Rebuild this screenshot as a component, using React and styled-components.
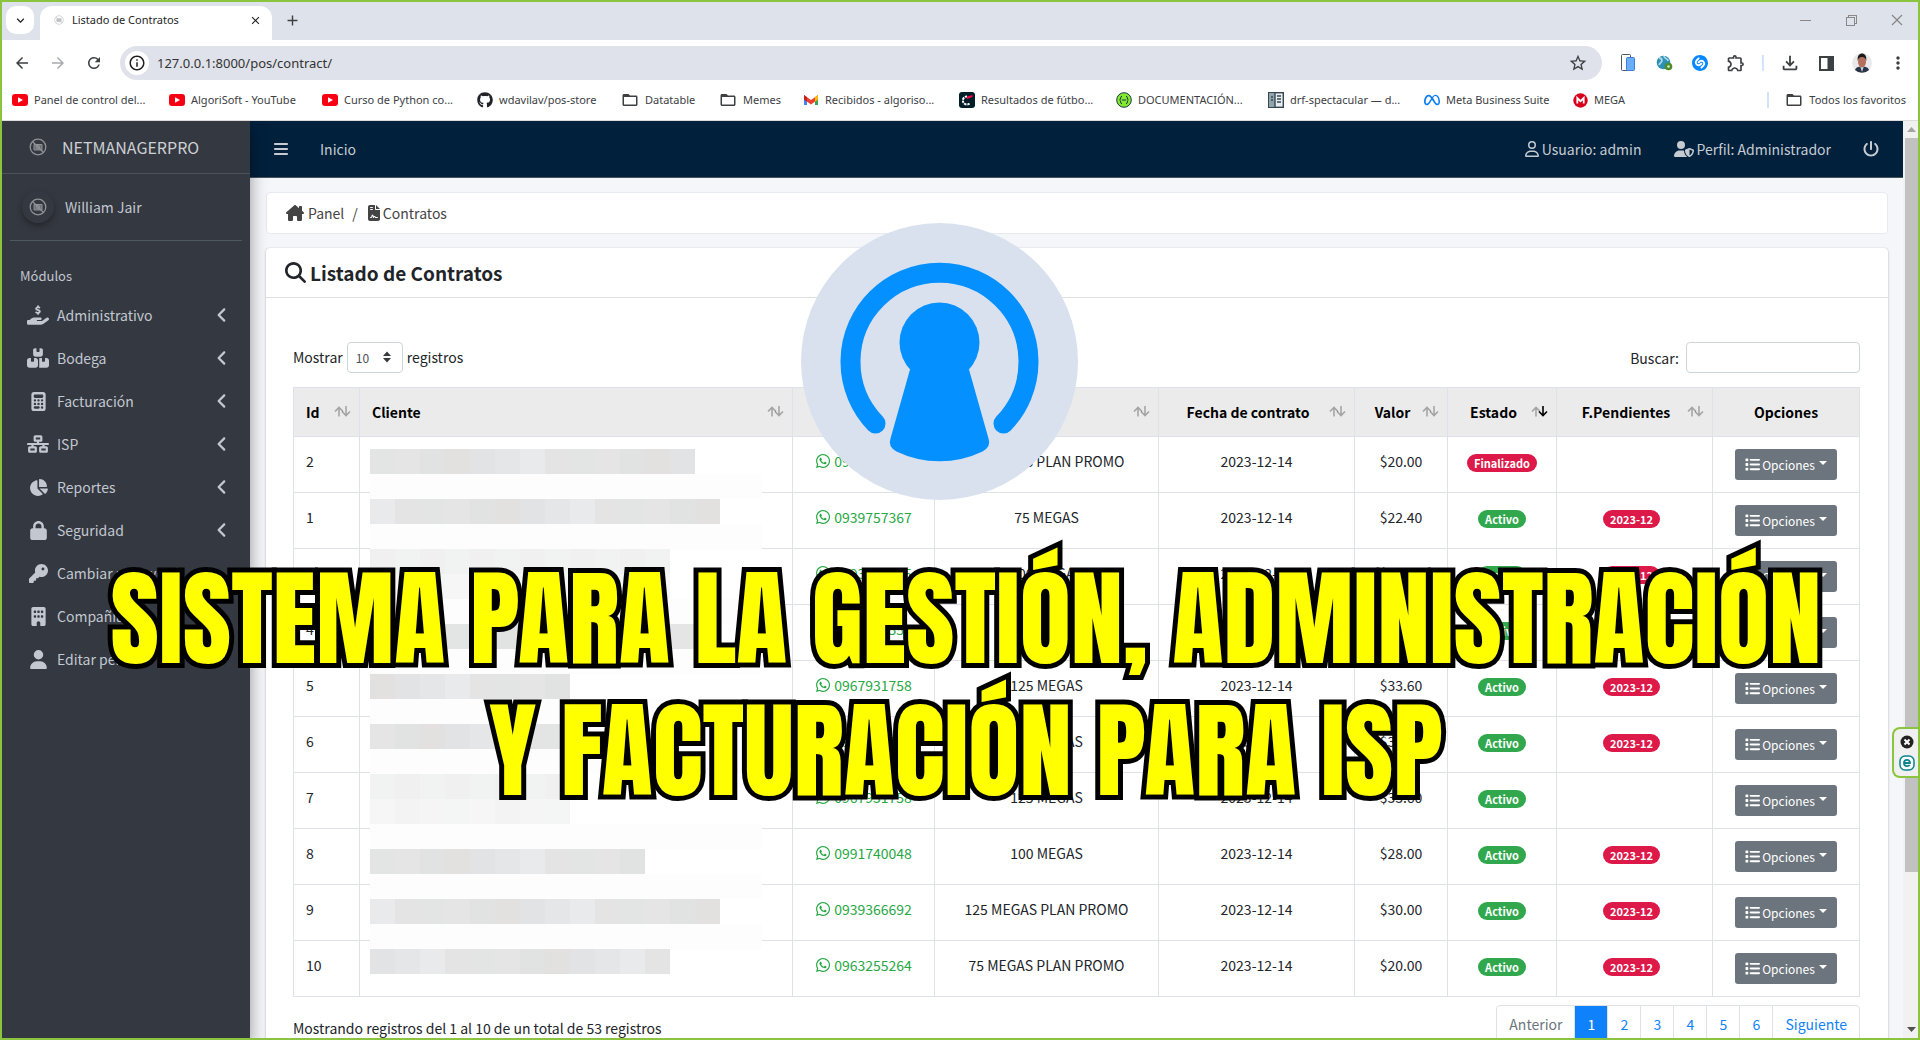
import React from "react";
import styled, { createGlobalStyle } from "styled-components";
import {
	FaAngleLeft,
	FaBars,
	FaBoxesStacked,
	FaBuilding,
	FaCalculator,
	FaChartPie,
	FaFileContract,
	FaGithub,
	FaHandHoldingDollar,
	FaHouseChimney,
	FaKey,
	FaList,
	FaLock,
	FaMagnifyingGlass,
	FaMeta,
	FaNetworkWired,
	FaPowerOff,
	FaRegUser,
	FaUser,
	FaUserShield,
	FaWhatsapp,
} from "react-icons/fa6";
import {
	MdAdd,
	MdArrowBack,
	MdArrowForward,
	MdClose,
	MdExpandMore,
	MdFolderOpen,
	MdInfoOutline,
	MdMoreVert,
	MdOutlineExtension,
	MdOutlineFileDownload,
	MdRefresh,
	MdStarBorder,
} from "react-icons/md";
import { SiShazam } from "react-icons/si";
import { VscChromeClose, VscChromeMinimize, VscChromeRestore } from "react-icons/vsc";

const GlobalStyle = createGlobalStyle`
	*, *::before, *::after {
		box-sizing: border-box;
	}
	body {
		margin: 0;
		color: #212529;
		font-family: "Noto Sans CJK SC", "Open Sans", sans-serif;
		font-size: 14px;
		line-height: 24px;
	}
	a {
		color: inherit;
		text-decoration: none;
	}
	button {
		padding: 0;
		border: 0;
		background: none;
		color: inherit;
		font: inherit;
	}
	svg {
		display: block;
		flex: none;
	}
`;

/* ---------- browser window ---------- */

const Window = styled.div`
	position: relative;
	display: flex;
	flex-direction: column;
	height: 100vh;
	overflow: hidden;
	border: 2px solid #8bc53f;
	background: #fff;
`;
const Chrome = styled.header`
	flex: none;
	background: #fff;
	border-bottom: 1px solid #dcdcdc;
	color: #3c4043;
	font-family: "Noto Sans", "Open Sans", sans-serif;
	font-size: 11px;
	line-height: 16px;
`;
const TabStrip = styled.div`
	display: flex;
	align-items: flex-start;
	height: 38px;
	padding: 4px 4px 0;
	background: #dee2ea;
`;
const TabSearch = styled.button`
	display: grid;
	place-items: center;
	width: 28px;
	height: 28px;
	border-radius: 10px;
	background: #fff;
	color: #1f1f1f;
`;
const Tab = styled.div`
	display: flex;
	align-items: center;
	gap: 8px;
	width: 232px;
	height: 34px;
	margin-left: 6px;
	padding: 0 10px 6px 14px;
	border-radius: 12px 12px 0 0;
	background: #fff;
	color: #1f1f1f;
`;
const TabIcon = styled.span`
	opacity: 0.5;
`;
const TabTitle = styled.span`
	flex: 1;
`;
const NewTab = styled.button`
	display: grid;
	place-items: center;
	width: 40px;
	height: 28px;
`;
const WindowButtons = styled.div`
	display: flex;
	gap: 30px;
	margin-left: auto;
	padding: 6px 9px 0 0;
	color: #888;
`;
const Toolbar = styled.div`
	display: flex;
	align-items: center;
	height: 46px;
	padding: 0 12px;
`;
const ToolButton = styled.button`
	display: grid;
	place-items: center;
	width: 36px;
	height: 32px;
	color: ${(p) => (p.$muted ? "#a9abae" : "#3c4043")};
`;
const NavButtons = styled.div`
	display: flex;
	margin-left: -10px;
`;
const Omnibox = styled.div`
	display: flex;
	align-items: center;
	flex: 1;
	height: 34px;
	margin: 0 8px 0 8px;
	padding: 0 14px 0 5px;
	border-radius: 17px;
	background: #dfe2ea;
`;
const SiteInfo = styled.button`
	display: grid;
	place-items: center;
	width: 24px;
	height: 24px;
	border-radius: 12px;
	background: #fff;
	color: #1f1f1f;
`;
const Address = styled.input`
	flex: 1;
	margin-left: 8px;
	padding: 0;
	border: 0;
	outline: 0;
	background: none;
	color: #333;
	font-family: inherit;
	font-size: 13px;
	line-height: 20px;
`;
const ToolDivider = styled.span`
	width: 2px;
	height: 16px;
	margin: 0 8px;
	background: #d3e3fd;
`;
const ToolGroup = styled.div`
	display: flex;
	align-items: center;
	margin-right: -10px;
`;
const Bookmarks = styled.nav`
	display: flex;
	align-items: center;
	height: 34px;
	padding: 0 12px 6px 10px;
`;
const Bookmark = styled.a`
	display: flex;
	align-items: center;
	gap: 6px;
	width: ${(p) => (p.$width ? `${p.$width}px` : "auto")};
	white-space: nowrap;
`;
const AllBookmarks = styled(Bookmark)`
	margin-left: 8px;
`;
const Spacer = styled.span`
	flex: 1;
`;

/* ---------- page ---------- */

const Viewport = styled.div`
	display: flex;
	flex: 1;
	min-height: 0;
	overflow: hidden;
	background: #f4f6f9;
`;
const Sidebar = styled.aside`
	position: relative;
	flex: none;
	width: 248px;
	background: #343840;
	box-shadow: 0 8px 16px rgba(0, 0, 0, 0.4);
	color: #c2c7d0;
`;
const Brand = styled.a`
	display: flex;
	align-items: center;
	gap: 15px;
	height: 53px;
	padding-left: 27px;
	border-bottom: 1px solid #4b545c;
	color: #cdd0d4;
	font-size: 16px;
`;
const UserPanel = styled.div`
	display: flex;
	align-items: center;
	gap: 11px;
	height: 67px;
	margin: 0 8px;
	padding-left: 12px;
	border-bottom: 1px solid #4f5962;
`;
const Avatar = styled.span`
	display: grid;
	place-items: center;
	width: 32px;
	height: 32px;
	border-radius: 16px;
	box-shadow: 0 3px 6px rgba(0, 0, 0, 0.35);
`;
const MenuHeader = styled.div`
	padding: 23px 18px 7px;
	font-size: 13px;
`;
const Menu = styled.nav`
	display: flex;
	flex-direction: column;
	gap: 3px;
`;
const MenuItem = styled.a`
	display: flex;
	align-items: center;
	height: 40px;
	padding: 0 19px 0 22px;
`;
const MenuIcon = styled.span`
	display: grid;
	place-items: center;
	width: 28px;
	margin-right: 5px;
	font-size: ${(p) => (p.$wide ? 22 : 19)}px;
`;
const MenuLabel = styled.span`
	flex: 1;
`;
const Content = styled.div`
	flex: 1;
	min-width: 0;
`;
const Navbar = styled.nav`
	display: flex;
	align-items: center;
	height: 57px;
	padding: 0 24px 0 23px;
	border-bottom: 1px solid #4b545c;
	background: #00203c;
	color: #c6cbd2;
`;
const NavLink = styled.a`
	display: flex;
	align-items: center;
	gap: 2px;
	margin-left: ${(p) => p.$gap || 0}px;
`;
const Main = styled.main`
	padding: 14px 15px 0 16px;
`;
const Breadcrumb = styled.nav`
	display: flex;
	align-items: center;
	gap: 8px;
	height: 42px;
	padding: 0 19px;
	border: 1px solid #e6e9ee;
	border-radius: 4px;
	background: #fff;
	color: #444;
`;
const Crumb = styled.a`
	display: flex;
	align-items: center;
	gap: ${(p) => p.$gap}px;
`;
const Card = styled.section`
	margin-top: 14px;
	border-radius: 4px;
	background: #fff;
	box-shadow: 0 0 1px rgba(0, 0, 0, 0.2), 0 1px 3px rgba(0, 0, 0, 0.2);
`;
const CardHeader = styled.header`
	display: flex;
	align-items: center;
	gap: 4px;
	height: 50px;
	padding-left: 19px;
	border-bottom: 1px solid #dfdfdf;
`;
const CardTitle = styled.h1`
	margin: 0;
	font-size: 19px;
	font-weight: 700;
	line-height: 24px;
`;
const CardBody = styled.div`
	padding: 44px 28px 60px 27px;
`;
const Controls = styled.div`
	display: flex;
	justify-content: space-between;
	margin-bottom: 14px;
`;
const Control = styled.label`
	display: flex;
	align-items: ${(p) => (p.$baseline ? "baseline" : "center")};
	gap: ${(p) => p.$gap}px;
	height: 31px;
`;
const SelectBox = styled.span`
	position: relative;
	svg {
		position: absolute;
		right: 12px;
		top: 9px;
		pointer-events: none;
	}
`;
const Select = styled.select`
	appearance: none;
	display: block;
	width: 56px;
	height: 31px;
	padding: 0 8px;
	border: 1px solid #ced4da;
	border-radius: 4px;
	background: #fff;
	color: #495057;
	font-family: inherit;
	font-size: 12px;
`;
const SearchInput = styled.input`
	width: 174px;
	height: 31px;
	border: 1px solid #ced4da;
	border-radius: 4px;
	background: #fff;
	font: inherit;
`;
const TableArea = styled.div`
	position: relative;
`;
const Table = styled.table`
	width: 100%;
	table-layout: fixed;
	border-collapse: collapse;
`;
const HeadCell = styled.th`
	height: 49px;
	padding: 0 ${(p) => (p.$sortable ? 8 : 12)}px 0 12px;
	border: 1px solid #dee2e6;
	background: #ebebeb;
	color: #000;
	font-weight: 700;
	white-space: nowrap;
`;
const HeadInner = styled.span`
	display: flex;
	align-items: center;
	gap: 4px;
`;
const HeadText = styled.span`
	flex: 1;
	text-align: ${(p) => (p.$left ? "left" : "center")};
`;
const Cell = styled.td`
	height: 56px;
	padding: 12px 12px 0;
	border: 1px solid #dee2e6;
	text-align: ${(p) => (p.$left ? "left" : "center")};
	vertical-align: top;
	white-space: nowrap;
`;
const Phone = styled.a`
	display: inline-flex;
	align-items: center;
	gap: 3px;
	color: #28a745;
`;
const Badge = styled.span`
	display: inline-block;
	margin-top: 5px;
	margin-right: ${(p) => (p.$spaced ? 6 : 0)}px;
	padding: 0 7px;
	border-radius: 9px;
	background: ${(p) => (p.$danger ? "#dc1948" : "#32a84e")};
	color: #fff;
	font-size: 11px;
	font-weight: 700;
	line-height: 18px;
	vertical-align: top;
`;
const OptionsButton = styled.button`
	display: inline-flex;
	align-items: center;
	justify-content: center;
	gap: 2px;
	width: 102px;
	height: 31px;
	border-radius: 3px;
	background: #6c757d;
	color: #fff;
	font-size: 12px;
	vertical-align: top;
`;
const Caret = styled.span`
	margin: -4px 0 0 2px;
	border: 4px solid transparent;
	border-top-color: #fff;
	border-bottom: 0;
`;
const Mosaic = styled.div`
	position: absolute;
	top: 62px;
	left: 77px;
	width: 392px;
	pointer-events: none;
`;
const MosaicRow = styled.div`
	display: flex;
	height: 25px;
	background: ${(p) => (p.$blank ? "#fdfdfd" : "#fff")};
`;
const Tile = styled.span`
	width: 25px;
	background: ${(p) => p.$color};
`;
const TableFooter = styled.div`
	display: flex;
	justify-content: space-between;
	padding-top: 8px;
`;
const Info = styled.div`
	padding-top: 11px;
`;
const Pagination = styled.nav`
	display: flex;
	height: 38px;
	border: 1px solid #dee2e6;
	border-radius: 4px;
`;
const PageLink = styled.a`
	display: grid;
	place-items: center;
	min-width: 33px;
	padding: 0 12px;
	border-right: 1px solid #dee2e6;
	background: ${(p) => (p.$active ? "#0f82fb" : "none")};
	color: ${(p) => (p.$active ? "#fff" : p.$muted ? "#6c757d" : "#0f82fb")};
	&:last-child {
		border-right: 0;
	}
`;

const Scrollbar = styled.div`
	display: flex;
	flex: none;
	flex-direction: column;
	align-items: flex-end;
	width: 15px;
	background: #f1f1f1;
	svg {
		margin: 6px 2px 5px;
	}
`;
const Thumb = styled.span`
	width: 13px;
	height: 80%;
	background: #c1c1c1;
`;

/* ---------- things floating over the window ---------- */

const Logo = styled.svg`
	position: absolute;
	left: 799px;
	top: 221px;
	width: 277px;
	height: 277px;
`;
const Headline = styled.h2`
	position: absolute;
	top: 551px;
	left: 0;
	width: 100%;
	margin: 0;
	padding-left: 12px;
	color: #ff0;
	font-family: Anton, "Roboto Condensed", sans-serif;
	font-size: 105px;
	font-weight: 400;
	line-height: 132px;
	text-align: center;
	white-space: nowrap;
	-webkit-text-stroke: 10px #000;
	paint-order: stroke fill;
	stroke-linejoin: round;
	pointer-events: none;
	span {
		display: block;
	}
`;
const SideWidget = styled.div`
	position: absolute;
	right: -2px;
	top: 725px;
	display: flex;
	flex-direction: column;
	align-items: center;
	gap: 6px;
	width: 28px;
	padding: 6px 2px 5px;
	border: 2px solid #8bc53f;
	border-right-width: 0;
	border-radius: 8px 0 0 8px;
	background: #f0f0f0;
`;

/* ---------- drawings ---------- */

function YoutubeIcon() {
	return (
		<svg width="16" height="12" viewBox="0 0 16 12">
			<rect width="16" height="12" rx="3" fill="#f80014" />
			<path d="M6 3.2v5.6L11 6z" fill="#fff" />
		</svg>
	);
}

function GmailIcon() {
	return (
		<svg width="16" height="12" viewBox="0 0 16 12">
			<path d="M1 1.5V11h3V4z" fill="#4285f4" />
			<path d="M12 4v7h3V1.5z" fill="#34a853" />
			<path d="M1 1 8 6l7-5v4.500L8 10.500 1 5.500z" fill="#ea4335" />
			<path d="M12 3.2 15 1v4.500l-3 2.200z" fill="#fbbc04" />
			<path d="M1 1l3 2.200v4.500L1 5.500z" fill="#c5221f" />
		</svg>
	);
}

function ScoreIcon() {
	return (
		<svg width="16" height="16" viewBox="0 0 16 16">
			<rect width="16" height="16" rx="3" fill="#001e28" />
			<path d="M10.500 11.500A4 4 0 1 1 8 4.500" fill="none" stroke="#fff" strokeWidth="2" strokeDasharray="2.4 0.8" />
			<path d="M8 7V4.500L13.500 3v2z" fill="#ff0046" />
		</svg>
	);
}

function SwaggerIcon() {
	return (
		<svg width="16" height="16" viewBox="0 0 16 16" fill="none" stroke="#173647">
			<circle cx="8" cy="8" r="7.3" fill="#85ea2d" />
			<path d="M6 4.2c-2 0-.8 3.4-2.4 3.8C5.2 8.4 4 11.8 6 11.8M10 4.2c2 0 .8 3.4 2.4 3.8-1.6.4-.4 3.8-2.4 3.8M5.8 8h4.4" />
		</svg>
	);
}

function DocsIcon() {
	return (
		<svg width="16" height="16" viewBox="0 0 16 16">
			<rect x=".7" y=".7" width="14.6" height="14.6" fill="#e8edf0" stroke="#37474f" strokeWidth="1.4" />
			<path d="M1 1h6v14H1z" fill="#90a4ae" />
			<path d="M7 1v14M3 5h2M3 8h2M9 4h4M9 7h4M9 10h4" stroke="#37474f" strokeWidth="1.4" />
		</svg>
	);
}

function MegaIcon() {
	return (
		<svg width="15" height="15" viewBox="0 0 15 15">
			<circle cx="7.5" cy="7.5" r="7.2" fill="#d9001b" />
			<path d="M4.3 10.5V5l3.2 3.2L10.7 5v5.5" fill="none" stroke="#fff" strokeWidth="1.8" />
		</svg>
	);
}

function NoPhotoIcon({ size = 18 }) {
	return (
		<svg width={size} height={size} viewBox="0 0 18 18" fill="none" stroke="#8f9296">
			<circle cx="9" cy="9" r="7.8" strokeWidth="1.3" />
			<path d="M5 6.5h8V12H5z" fill="#6b6e73" />
			<circle cx="9" cy="9.2" r="1.7" />
			<path d="m3.5 3.5 11 11" strokeWidth="1.3" />
		</svg>
	);
}

function DevicesIcon() {
	return (
		<svg width="16" height="18" viewBox="0 0 16 18">
			<rect x="1.5" y=".5" width="9" height="16" rx="1" fill="#fff" stroke="#4a5568" />
			<rect x="6.5" y="3.5" width="8" height="13" rx="1" fill="#6aaefb" stroke="#3b7dd8" />
		</svg>
	);
}

function GlobeIcon() {
	return (
		<svg width="17" height="16" viewBox="0 0 17 16">
			<circle cx="7.5" cy="7.5" r="6.8" fill="#2f8fb5" />
			<path d="M3 3c2 0 3 1 3 2.5S3.500 8 3 10M8 1c0 3 4 2 4 5" fill="none" stroke="#a6dbe8" strokeWidth="1.8" />
			<circle cx="12.5" cy="11.5" r="3.8" fill="#4c8c2b" />
			<circle cx="12.5" cy="11.5" r="1.3" fill="#d7efc8" />
		</svg>
	);
}

function SidePanelIcon() {
	return (
		<svg width="15" height="15" viewBox="0 0 15 15">
			<rect x="1" y="1" width="13" height="13" fill="none" stroke="#3c4043" strokeWidth="2" />
			<path d="M8.5 1H14v13H8.5z" fill="#3c4043" />
		</svg>
	);
}

function ProfileIcon() {
	return (
		<svg width="20" height="20" viewBox="0 0 20 20">
			<circle cx="10" cy="10" r="10" fill="#e9e9ec" />
			<path d="M3 17c1-3 4-3.5 7-3.5s6 .5 7 3.5a10 10 0 0 1-14 0" fill="#2b3346" />
			<path d="m8 13 2 6 2-6z" fill="#c9d6e6" />
			<ellipse cx="10" cy="8.500" rx="4" ry="6" fill="#b5705c" />
			<path d="M5.800 8C5 2.500 7.500 .5 10 .5s5 2 4.200 7.500C13.500 5 12.500 4 10 4S6.500 5 5.800 8" fill="#1d1a1c" />
		</svg>
	);
}

function SortIcon({ desc }) {
	return (
		<svg width="17" height="12" viewBox="0 0 17 12" fill="none" stroke="#000" strokeWidth="1.6">
			<path d="M5 10.500V1.500M1 5.500l4-4 4 4" opacity="0.3" />
			<path d="M12 0v9.500M8 5.500l4 4 4-4" opacity={desc ? 1 : 0.3} />
		</svg>
	);
}

function KeyholeLogo() {
	return (
		<Logo viewBox="-138.5 -138.5 277 277">
			<circle r="138.5" fill="#d9e1ef" />
			<path d="M-64 62a89 89 0 1 1 128 0" fill="none" stroke="#0590ff" strokeWidth="20" strokeLinecap="round" />
			<circle cy="-19" r="40" fill="#0590ff" />
			<path d="M-29.5 8-49 77q-3 8 6 13a99 99 0 0 0 86 0q9-5 6-13L29.5 8z" fill="#0590ff" />
		</Logo>
	);
}

/* ---------- data ---------- */

const folder = <MdFolderOpen size={18} />;

const bookmarks = [
	{ label: "Panel de control del...", icon: <YoutubeIcon />, width: 157 },
	{ label: "AlgoriSoft - YouTube", icon: <YoutubeIcon />, width: 153 },
	{ label: "Curso de Python co...", icon: <YoutubeIcon />, width: 155 },
	{ label: "wdavilav/pos-store", icon: <FaGithub size={16} color="#1f2328" />, width: 144 },
	{ label: "Datatable", icon: folder, width: 98 },
	{ label: "Memes", icon: folder, width: 84 },
	{ label: "Recibidos - algoriso...", icon: <GmailIcon />, width: 156 },
	{ label: "Resultados de fútbo...", icon: <ScoreIcon />, width: 157 },
	{ label: "DOCUMENTACIÓN...", icon: <SwaggerIcon />, width: 152 },
	{ label: "drf-spectacular — d...", icon: <DocsIcon />, width: 156 },
	{ label: "Meta Business Suite", icon: <FaMeta size={16} color="#0a7cf5" />, width: 149 },
	{ label: "MEGA", icon: <MegaIcon />, width: 60 },
];

const modules = [
	{ label: "Administrativo", icon: FaHandHoldingDollar, open: true, wide: true },
	{ label: "Bodega", icon: FaBoxesStacked, open: true, wide: true },
	{ label: "Facturación", icon: FaCalculator, open: true },
	{ label: "ISP", icon: FaNetworkWired, open: true, wide: true },
	{ label: "Reportes", icon: FaChartPie, open: true },
	{ label: "Seguridad", icon: FaLock, open: true },
	{ label: "Cambiar password", icon: FaKey },
	{ label: "Compañía", icon: FaBuilding },
	{ label: "Editar perfil", icon: FaUser },
];

const columns = [
	{ label: "Id", width: 66, left: true, sort: true },
	{ label: "Cliente", left: true, sort: true },
	{ label: "Celular", width: 142, sort: true },
	{ label: "Plan", width: 224, sort: true },
	{ label: "Fecha de contrato", width: 196, sort: true },
	{ label: "Valor", width: 93, sort: true },
	{ label: "Estado", width: 109, sort: true, desc: true },
	{ label: "F.Pendientes", width: 156, sort: true },
	{ label: "Opciones", width: 147 },
];

const contracts = [
	{ id: 2, phone: "0963255264", plan: "75 MEGAS PLAN PROMO", value: "$20.00", ended: true },
	{ id: 1, phone: "0939757367", plan: "75 MEGAS", value: "$22.40", due: "2023-12" },
	{ id: 3, phone: "0993965105", plan: "100 MEGAS", value: "$28.00", due: "2023-12" },
	{ id: 4, phone: "0967935552", plan: "100 MEGAS", value: "$28.00", due: "2023-12" },
	{ id: 5, phone: "0967931758", plan: "125 MEGAS", value: "$33.60", due: "2023-12" },
	{ id: 6, phone: "0967931758", plan: "125 MEGAS", value: "$33.60", due: "2023-12" },
	{ id: 7, phone: "0967931758", plan: "125 MEGAS", value: "$33.60" },
	{ id: 8, phone: "0991740048", plan: "100 MEGAS", value: "$28.00", due: "2023-12" },
	{ id: 9, phone: "0939366692", plan: "125 MEGAS PLAN PROMO", value: "$30.00", due: "2023-12" },
	{ id: 10, phone: "0963255264", plan: "75 MEGAS PLAN PROMO", value: "$20.00", due: "2023-12" },
];

const dark = ["#e3e5e4", "#e2e1df", "#e9eaec", "#e5e5e5", "#e2e3e5", "#e4e4e4", "#e1e3e2", "#e5e6e8"];
const light = ["#f5f5f5", "#f0f3f2", "#ececec", "#f2f2f2", "#f0f0f0", "#eeeeee"];
const faint = ["#f5f5f5", "#f3f3f3", "#f6f6f6", "#f4f5f5"];

// hidden client names: tiles per strip, 0 is an empty strip
const mosaic = [
	[13, dark], [0], [14, dark], [0], [12, light], [12, faint], [0],
	[14, dark], [0], [8, dark], [0], [8, dark], [0], [8, light],
	[8, faint], [0], [11, dark], [0], [14, dark], [0], [12, dark],
];

/* ---------- parts ---------- */

function BrowserChrome() {
	return (
		<Chrome>
			<TabStrip>
				<TabSearch aria-label="Buscar pestañas">
					<MdExpandMore size={15} />
				</TabSearch>
				<Tab>
					<TabIcon>
						<NoPhotoIcon size={10} />
					</TabIcon>
					<TabTitle>Listado de Contratos</TabTitle>
					<MdClose size={13} />
				</Tab>
				<NewTab aria-label="Nueva pestaña">
					<MdAdd size={17} />
				</NewTab>
				<WindowButtons>
					<VscChromeMinimize size={16} />
					<VscChromeRestore size={16} />
					<VscChromeClose size={16} />
				</WindowButtons>
			</TabStrip>
			<Toolbar>
				<NavButtons>
					<ToolButton aria-label="Atrás">
						<MdArrowBack size={18} />
					</ToolButton>
					<ToolButton aria-label="Adelante" $muted>
						<MdArrowForward size={18} />
					</ToolButton>
					<ToolButton aria-label="Recargar">
						<MdRefresh size={18} />
					</ToolButton>
				</NavButtons>
				<Omnibox>
					<SiteInfo aria-label="Información del sitio">
						<MdInfoOutline size={18} />
					</SiteInfo>
					<Address aria-label="Dirección" defaultValue="127.0.0.1:8000/pos/contract/" />
					<MdStarBorder size={20} />
				</Omnibox>
				<ToolGroup>
					<ToolButton aria-label="Dispositivos">
						<DevicesIcon />
					</ToolButton>
					<ToolButton aria-label="Descargador">
						<GlobeIcon />
					</ToolButton>
					<ToolButton aria-label="Shazam">
						<SiShazam size={16} color="#0a88ff" />
					</ToolButton>
					<ToolButton aria-label="Extensiones">
						<MdOutlineExtension size={20} />
					</ToolButton>
					<ToolDivider />
					<ToolButton aria-label="Descargas">
						<MdOutlineFileDownload size={22} />
					</ToolButton>
					<ToolButton aria-label="Panel lateral">
						<SidePanelIcon />
					</ToolButton>
					<ToolButton aria-label="Perfil">
						<ProfileIcon />
					</ToolButton>
					<ToolButton aria-label="Menú">
						<MdMoreVert size={20} />
					</ToolButton>
				</ToolGroup>
			</Toolbar>
			<Bookmarks>
				{bookmarks.map((b) => (
					<Bookmark key={b.label} href="#" $width={b.width}>
						{b.icon}
						{b.label}
					</Bookmark>
				))}
				<Spacer />
				<ToolDivider />
				<AllBookmarks href="#">
					{folder}
					Todos los favoritos
				</AllBookmarks>
			</Bookmarks>
		</Chrome>
	);
}

function SideMenu() {
	return (
		<Sidebar>
			<Brand href="#">
				<NoPhotoIcon />
				NETMANAGERPRO
			</Brand>
			<UserPanel>
				<Avatar>
					<NoPhotoIcon />
				</Avatar>
				<a href="#">William Jair</a>
			</UserPanel>
			<MenuHeader>Módulos</MenuHeader>
			<Menu>
				{modules.map(({ label, icon: Icon, open, wide }) => (
					<MenuItem key={label} href="#">
						<MenuIcon $wide={wide}>
							<Icon />
						</MenuIcon>
						<MenuLabel>{label}</MenuLabel>
						{open && <FaAngleLeft size={18} />}
					</MenuItem>
				))}
			</Menu>
		</Sidebar>
	);
}

function ContractRow({ contract }) {
	const { id, phone, plan, value, ended, due } = contract;
	return (
		<tr>
			<Cell $left>{id}</Cell>
			<Cell />
			<Cell>
				<Phone href="#">
					<FaWhatsapp size={16} />
					{phone}
				</Phone>
			</Cell>
			<Cell>{plan}</Cell>
			<Cell>2023-12-14</Cell>
			<Cell>{value}</Cell>
			<Cell>
				<Badge $danger={ended}>{ended ? "Finalizado" : "Activo"}</Badge>
			</Cell>
			<Cell>
				{due && (
					<Badge $danger $spaced>
						{due}
					</Badge>
				)}
			</Cell>
			<Cell>
				<OptionsButton>
					<FaList size={15} />
					Opciones
					<Caret />
				</OptionsButton>
			</Cell>
		</tr>
	);
}

function ContractTable() {
	return (
		<TableArea>
			<Table>
				<colgroup>
					{columns.map((c) => (
						<col key={c.label} width={c.width} />
					))}
				</colgroup>
				<thead>
					<tr>
						{columns.map((c) => (
							<HeadCell key={c.label} $sortable={c.sort}>
								<HeadInner>
									<HeadText $left={c.left}>{c.label}</HeadText>
									{c.sort && <SortIcon desc={c.desc} />}
								</HeadInner>
							</HeadCell>
						))}
					</tr>
				</thead>
				<tbody>
					{contracts.map((c) => (
						<ContractRow key={c.id} contract={c} />
					))}
				</tbody>
			</Table>
			<Mosaic>
				{mosaic.map(([count, shades], row) => (
					<MosaicRow key={row} $blank={!count}>
						{Array.from({ length: count }, (_, i) => (
							<Tile key={i} $color={shades[(i * 3 + row) % shades.length]} />
						))}
					</MosaicRow>
				))}
			</Mosaic>
		</TableArea>
	);
}

function App() {
	return (
		<>
			<GlobalStyle />
			<Window>
				<BrowserChrome />
				<Viewport>
					<SideMenu />
					<Content>
						<Navbar>
							<FaBars size={16} />
							<NavLink href="#" $gap={31}>
								Inicio
							</NavLink>
							<Spacer />
							<NavLink href="#">
								<FaRegUser size={16} />
								Usuario: admin
							</NavLink>
							<NavLink href="#" $gap={33}>
								<FaUserShield size={20} />
								Perfil: Administrador
							</NavLink>
							<NavLink href="#" aria-label="Salir" $gap={32}>
								<FaPowerOff size={16} />
							</NavLink>
						</Navbar>
						<Main>
							<Breadcrumb>
								<Crumb href="#" $gap={4}>
									<FaHouseChimney size={18} />
									Panel
								</Crumb>
								<span>/</span>
								<Crumb href="#" $gap={1}>
									<FaFileContract size={16} />
									Contratos
								</Crumb>
							</Breadcrumb>
							<Card>
								<CardHeader>
									<FaMagnifyingGlass size={21} />
									<CardTitle>Listado de Contratos</CardTitle>
								</CardHeader>
								<CardBody>
									<Controls>
										<Control $gap={4} $baseline>
											Mostrar
											<SelectBox>
												<Select defaultValue="10">
													<option>10</option>
													<option>25</option>
													<option>50</option>
												</Select>
												<svg width="8" height="12" viewBox="0 0 8 12" fill="#343a40">
													<path d="M0 5l4-4.5L8 5zM0 7l4 4.5L8 7z" />
												</svg>
											</SelectBox>
											registros
										</Control>
										<Control $gap={7}>
											Buscar:
											<SearchInput type="search" />
										</Control>
									</Controls>
									<ContractTable />
									<TableFooter>
										<Info>Mostrando registros del 1 al 10 de un total de 53 registros</Info>
										<Pagination>
											<PageLink href="#" $muted>
												Anterior
											</PageLink>
											{[1, 2, 3, 4, 5, 6].map((n) => (
												<PageLink key={n} href="#" $active={n === 1}>
													{n}
												</PageLink>
											))}
											<PageLink href="#">Siguiente</PageLink>
										</Pagination>
									</TableFooter>
								</CardBody>
							</Card>
						</Main>
					</Content>
					<Scrollbar>
						<svg width="9" height="6" viewBox="0 0 9 6" fill="#a3a3a3">
							<path d="M4.5 0 9 5H0z" />
						</svg>
						<Thumb />
						<Spacer />
						<svg width="9" height="6" viewBox="0 0 9 6" fill="#505050">
							<path d="M4.5 5 9 0H0z" />
						</svg>
					</Scrollbar>
				</Viewport>
				<KeyholeLogo />
				<Headline>
					<span>SISTEMA PARA LA GESTIÓN, ADMINISTRACIÓN</span>
					<span>Y FACTURACIÓN PARA ISP</span>
				</Headline>
				<SideWidget>
					<svg width="14" height="14" viewBox="0 0 14 14">
						<circle cx="7" cy="7" r="6.5" fill="#222" />
						<path d="m4.5 4.5 5 5m0-5-5 5" stroke="#fff" strokeWidth="2" />
					</svg>
					<svg width="16" height="16" viewBox="0 0 16 16" fill="none" stroke="#0b8390">
						<rect x="1" y="1" width="14" height="14" rx="5" fill="#fff" strokeWidth="1.5" />
						<path d="M5 8h6c0-4.5-6-4-6 0s4.5 3.5 5.700 2" strokeWidth="1.8" />
					</svg>
				</SideWidget>
			</Window>
		</>
	);
}

export default App;
